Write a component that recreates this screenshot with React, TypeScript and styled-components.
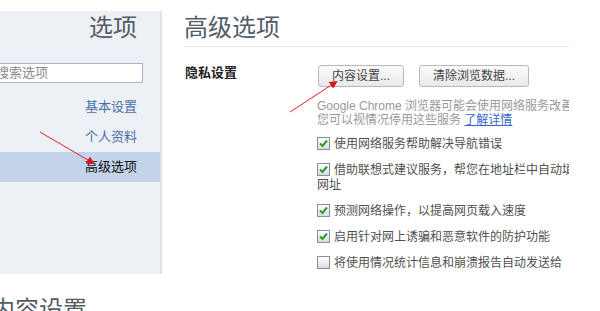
import styled, { createGlobalStyle } from "styled-components";

const GlobalStyle = createGlobalStyle`
  html, body {
    margin: 0;
    padding: 0;
    background: #ffffff;
  }
  body {
    font-family: "Liberation Sans", "Noto Sans CJK SC", sans-serif;
  }
`;

const Page = styled.div`
  position: relative;
  width: 600px;
  height: 311px;
  overflow: hidden;
  background: #ffffff;
`;

const TopArea = styled.div`
  display: flex;
  align-items: flex-start;
  height: 274px;
`;

const Sidebar = styled.nav`
  margin-top: 11px;
  width: 160px;
  height: 263px;
  background: #edf0f4;
  border-right: 2px solid #dde2e9;
  overflow: hidden;
  display: flex;
  flex-direction: column;
`;

const SideTitle = styled.h1`
  margin: 5px 0 0;
  padding-right: 23px;
  text-align: right;
  font-size: 24px;
  line-height: 24px;
  font-weight: normal;
  color: #535c68;
`;

const Search = styled.div`
  margin: 23px 0 0 -9px;
  width: 146px;
  height: 18px;
  background: #ffffff;
  border: 1px solid #a9b5c6;
  padding-left: 4px;
  font-size: 13px;
  line-height: 18px;
  color: #8a8a8a;
  white-space: nowrap;
`;

const NavList = styled.div`
  margin-top: 9px;
  display: flex;
  flex-direction: column;
`;

const NavItem = styled.div<{ $active?: boolean }>`
  height: 30px;
  line-height: 30px;
  padding-right: 23px;
  text-align: right;
  font-size: 13px;
  color: ${(p) => (p.$active ? "#111111" : "#4a6fa8")};
  background: ${(p) => (p.$active ? "#c3d3e9" : "transparent")};
`;

const Main = styled.main`
  width: 385px;
  padding-left: 22px;
  overflow: hidden;
`;

const MainTitle = styled.h1`
  margin: 16px 0 0;
  padding-bottom: 6px;
  border-bottom: 1px solid #e6e6e6;
  font-size: 24px;
  line-height: 24px;
  font-weight: normal;
  color: #535c68;
`;

const Section = styled.section`
  margin-top: 18px;
  display: grid;
  grid-template-columns: 133px 330px;
`;

const SectionLabel = styled.div`
  font-size: 13px;
  line-height: 16px;
  font-weight: bold;
  color: #222222;
  padding-left: 1px;
`;

const Controls = styled.div`
  display: flex;
  flex-direction: column;
`;

const ButtonRow = styled.div`
  display: flex;
  gap: 15px;
  padding-left: 1px;
`;

const Button = styled.button`
  height: 22px;
  padding: 0 13px;
  border: 1px solid #b9b9b9;
  border-radius: 3px;
  background: linear-gradient(#fbfbfb, #e9e9e9);
  font-family: inherit;
  font-size: 12px;
  line-height: 20px;
  color: #444444;
  white-space: nowrap;
`;

const Description = styled.p`
  margin: 12px 0 0;
  font-size: 12px;
  line-height: 14px;
  color: #999999;
  white-space: nowrap;
`;

const Link = styled.a`
  color: #3767c4;
  text-decoration: underline;
`;

const CheckList = styled.div`
  margin-top: 10px;
  display: flex;
  flex-direction: column;
  gap: 11px;
`;

const CheckRow = styled.div`
  font-size: 12px;
  line-height: 15px;
  color: #505050;
  white-space: nowrap;
`;

const Box = styled.span`
  display: inline-block;
  vertical-align: -2px;
  width: 11px;
  height: 11px;
  margin-right: 4px;
  border: 1px solid #7f8fa6;
  background: linear-gradient(#ffffff, #dcdcdc);
  position: relative;

  svg {
    position: absolute;
    left: 1px;
    top: 1px;
  }
`;

const BottomHeading = styled.h1`
  margin: 24px 0 0 -9px;
  font-size: 24px;
  line-height: 24px;
  font-weight: normal;
  color: #535c68;
`;

const Annotations = styled.svg`
  position: absolute;
  left: 0;
  top: 0;
  pointer-events: none;
`;

const Checkbox = ({ checked }: { checked: boolean }) => (
  <Box>
    {checked && (
      <svg width="9" height="9" viewBox="0 0 9 9">
        <path d="M1 4.5 L3.5 7 L8 1.5" fill="none" stroke="#2f9a2f" strokeWidth="2" />
      </svg>
    )}
  </Box>
);

const options = [
  { checked: true, lines: ["使用网络服务帮助解决导航错误"] },
  { checked: true, lines: ["借助联想式建议服务，帮您在地址栏中自动填写搜索字词和", "网址"] },
  { checked: true, lines: ["预测网络操作，以提高网页载入速度"] },
  { checked: true, lines: ["启用针对网上诱骗和恶意软件的防护功能"] },
  { checked: false, lines: ["将使用情况统计信息和崩溃报告自动发送给"] },
];

export default function App() {
  return (
    <Page>
      <GlobalStyle />
      <TopArea>
        <Sidebar>
          <SideTitle>选项</SideTitle>
          <Search>搜索选项</Search>
          <NavList>
            <NavItem>基本设置</NavItem>
            <NavItem>个人资料</NavItem>
            <NavItem $active>高级选项</NavItem>
          </NavList>
        </Sidebar>
        <Main>
          <MainTitle>高级选项</MainTitle>
          <Section>
            <SectionLabel>隐私设置</SectionLabel>
            <Controls>
              <ButtonRow>
                <Button>内容设置...</Button>
                <Button>清除浏览数据...</Button>
              </ButtonRow>
              <Description>
                Google Chrome 浏览器可能会使用网络服务改善您的浏览体验。
                <br />
                您可以视情况停用这些服务 <Link>了解详情</Link>
              </Description>
              <CheckList>
                {options.map((o, i) => (
                  <CheckRow key={i}>
                    <Checkbox checked={o.checked} />
                    {o.lines[0]}
                    {o.lines[1] && (
                      <>
                        <br />
                        {o.lines[1]}
                      </>
                    )}
                  </CheckRow>
                ))}
              </CheckList>
            </Controls>
          </Section>
        </Main>
      </TopArea>
      <BottomHeading>内容设置</BottomHeading>
      <Annotations width="600" height="311">
        <defs>
          <marker id="head" markerWidth="8" markerHeight="8" refX="6" refY="4" orient="auto" markerUnits="userSpaceOnUse">
            <path d="M0 0 L8 4 L0 8 Z" fill="#e01010" />
          </marker>
        </defs>
        <line x1="40" y1="132" x2="93" y2="163" stroke="#e02020" strokeWidth="1" markerEnd="url(#head)" />
        <line x1="290" y1="112" x2="336" y2="82" stroke="#e02020" strokeWidth="1" markerEnd="url(#head)" />
      </Annotations>
    </Page>
  );
}
